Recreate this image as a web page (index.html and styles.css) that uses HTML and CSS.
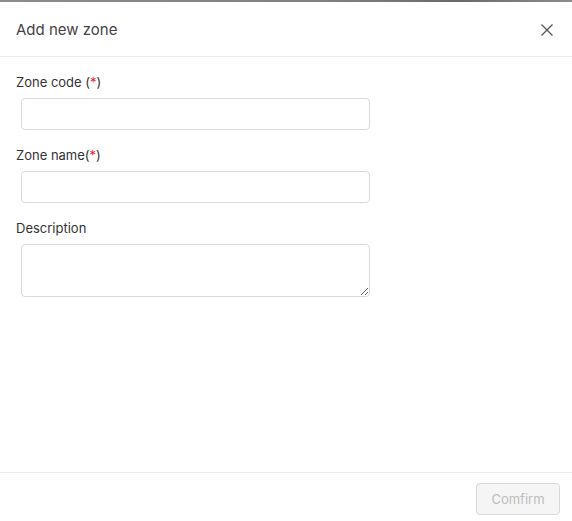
FILE: index.html
```html
<!DOCTYPE html>
<html>
<head>
<meta charset="utf-8">
<link rel="stylesheet" href="styles.css">
</head>
<body>
<div class="topbar"></div>
<div class="modal">
  <div class="header">
    <div class="title">Add new zone</div>
    <svg class="close" width="12" height="12" viewBox="0 0 12 12"><path d="M0.5 0.5L11.5 11.5M11.5 0.5L0.5 11.5" stroke="#555" stroke-width="1.3" fill="none"/></svg>
  </div>
  <div class="content">
    <div class="field">
      <label class="label">Zone code (<span class="req">*</span>)</label>
      <input class="input" type="text">
    </div>
    <div class="field">
      <label class="label">Zone name(<span class="req">*</span>)</label>
      <input class="input" type="text">
    </div>
    <div class="field">
      <label class="label">Description</label>
      <textarea class="input textarea"></textarea>
    </div>
  </div>
  <div class="footer">
    <button class="btn" disabled>Comfirm</button>
  </div>
</div>
</body>
</html>
```
FILE: styles.css
```css
html, body {
  margin: 0;
  padding: 0;
  background: #fff;
  height: 100%;
}
body {
  font-family: Inter, "Noto Sans", sans-serif;
  color: #333;
  display: flex;
  flex-direction: column;
}
.topbar {
  height: 2px;
  background: linear-gradient(to right, #8c8c8c, #7e7e7e 60%, #6a6a6a 80%, #8c8c8c);
  flex-shrink: 0;
}
.modal {
  flex: 1;
  display: flex;
  flex-direction: column;
}
.header {
  height: 54px;
  border-bottom: 1px solid #ececec;
  display: flex;
  align-items: center;
  justify-content: space-between;
  padding: 0 19px 0 16px;
}
.title {
  font-size: 15px;
  color: #444;
}
.close {
  display: block;
  margin-top: 2px;
}
.content {
  flex: 1;
  padding: 16px 16px 0;
}
.field {
  display: flex;
  flex-direction: column;
  margin-bottom: 16px;
}
.label {
  font-size: 13px;
  line-height: 18px;
  margin-bottom: 7px;
}
.req {
  color: #f5222d;
}
.input {
  box-sizing: border-box;
  width: 349px;
  height: 32px;
  margin-left: 5px;
  border: 1px solid #d9d9d9;
  border-radius: 4px;
  background: #fff;
  font-family: inherit;
  font-size: 13px;
  outline: none;
  padding: 4px 8px;
}
.textarea {
  height: 53px;
  resize: both;
}
.footer {
  border-top: 1px solid #ececec;
  padding: 10px 12px 6px;
  display: flex;
  justify-content: flex-end;
}
.btn {
  width: 84px;
  height: 32px;
  box-sizing: border-box;
  border: 1px solid #d9d9d9;
  border-radius: 4px;
  background: #f5f5f5;
  color: #bdbdbd;
  font-family: inherit;
  font-size: 13px;
}
```
